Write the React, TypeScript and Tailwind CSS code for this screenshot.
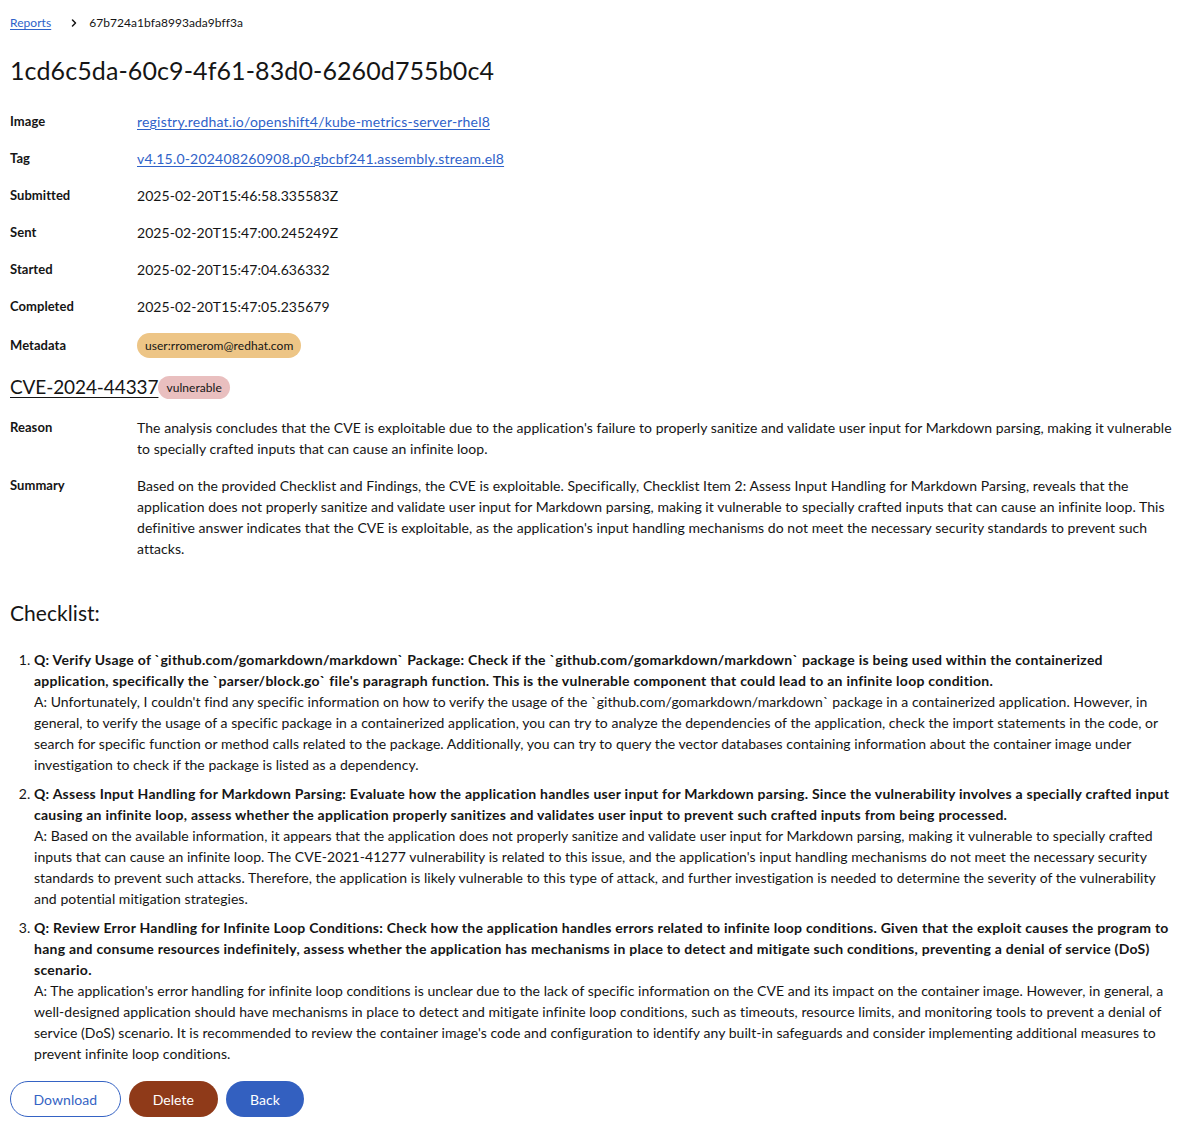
import { FiChevronRight } from 'react-icons/fi';

const fields: { label: string; value: string; link?: boolean }[] = [
  { label: 'Image', value: 'registry.redhat.io/openshift4/kube-metrics-server-rhel8', link: true },
  { label: 'Tag', value: 'v4.15.0-202408260908.p0.gbcbf241.assembly.stream.el8', link: true },
  { label: 'Submitted', value: '2025-02-20T15:46:58.335583Z' },
  { label: 'Sent', value: '2025-02-20T15:47:00.245249Z' },
  { label: 'Started', value: '2025-02-20T15:47:04.636332' },
  { label: 'Completed', value: '2025-02-20T15:47:05.235679' },
];

const checklist = [
  {
    q: 'Q: Verify Usage of `github.com/gomarkdown/markdown` Package: Check if the `github.com/gomarkdown/markdown` package is being used within the containerized application, specifically the `parser/block.go` file\'s paragraph function. This is the vulnerable component that could lead to an infinite loop condition.',
    a: "A: Unfortunately, I couldn't find any specific information on how to verify the usage of the `github.com/gomarkdown/markdown` package in a containerized application. However, in general, to verify the usage of a specific package in a containerized application, you can try to analyze the dependencies of the application, check the import statements in the code, or search for specific function or method calls related to the package. Additionally, you can try to query the vector databases containing information about the container image under investigation to check if the package is listed as a dependency.",
  },
  {
    q: 'Q: Assess Input Handling for Markdown Parsing: Evaluate how the application handles user input for Markdown parsing. Since the vulnerability involves a specially crafted input causing an infinite loop, assess whether the application properly sanitizes and validates user input to prevent such crafted inputs from being processed.',
    a: "A: Based on the available information, it appears that the application does not properly sanitize and validate user input for Markdown parsing, making it vulnerable to specially crafted inputs that can cause an infinite loop. The CVE-2021-41277 vulnerability is related to this issue, and the application's input handling mechanisms do not meet the necessary security standards to prevent such attacks. Therefore, the application is likely vulnerable to this type of attack, and further investigation is needed to determine the severity of the vulnerability and potential mitigation strategies.",
  },
  {
    q: 'Q: Review Error Handling for Infinite Loop Conditions: Check how the application handles errors related to infinite loop conditions. Given that the exploit causes the program to hang and consume resources indefinitely, assess whether the application has mechanisms in place to detect and mitigate such conditions, preventing a denial of service (DoS) scenario.',
    a: "A: The application's error handling for infinite loop conditions is unclear due to the lack of specific information on the CVE and its impact on the container image. However, in general, a well-designed application should have mechanisms in place to detect and mitigate infinite loop conditions, such as timeouts, resource limits, and monitoring tools to prevent a denial of service (DoS) scenario. It is recommended to review the container image's code and configuration to identify any built-in safeguards and consider implementing additional measures to prevent infinite loop conditions.",
  },
];

export default function App() {
  return (
    <div className="min-h-screen bg-white px-[10px] text-[#151515] font-['Lato','Liberation_Sans',sans-serif] text-[14px] leading-[21px] tracking-[0.05px]">
      {/* Breadcrumb */}
      <nav className="flex items-center pt-[14px] text-[12px] leading-[18px]">
        <a href="#" className="text-[#2f62c9] underline underline-offset-2">Reports</a>
        <FiChevronRight className="ml-[17px] mr-[9px] text-[#151515]" size={12} strokeWidth={3} />
        <span>67b724a1bfa8993ada9bff3a</span>
      </nav>

      <h1 className="mt-[22px] text-[25px] leading-[32px] tracking-[0.1px]">1cd6c5da-60c9-4f61-83d0-6260d755b0c4</h1>

      {/* Report details */}
      <dl className="mt-[25px] grid grid-cols-[127px_1fr] gap-y-[16px]">
        {fields.map((f) => (
          <div key={f.label} className="contents">
            <dt className="text-[13px] font-bold leading-[21px]">{f.label}</dt>
            <dd>
              {f.link ? (
                <a href="#" className="text-[#2f62c9] underline underline-offset-2 tracking-[0.2px]">{f.value}</a>
              ) : (
                f.value
              )}
            </dd>
          </div>
        ))}
        <dt className="text-[13px] font-bold leading-[25px]">Metadata</dt>
        <dd>
          <span className="inline-flex h-[25px] items-center rounded-full bg-[#edc586] px-[8px] text-[12px]">
            user:rromerom@redhat.com
          </span>
        </dd>
      </dl>

      <div className="mt-[15px] flex items-center">
        <a href="#" className="text-[19px] leading-[28px] tracking-[-0.1px] underline underline-offset-[3px] text-[#151515]">CVE-2024-44337</a>
        <span className="inline-flex h-[23px] items-center rounded-full bg-[#e9bfbf] px-[8px] text-[12px]">vulnerable</span>
      </div>

      <dl className="mt-[16px] grid grid-cols-[127px_1fr] gap-y-[16px]">
        <dt className="text-[13px] font-bold leading-[21px]">Reason</dt>
        <dd>
          The analysis concludes that the CVE is exploitable due to the application's failure to properly sanitize and validate user input for Markdown parsing, making it vulnerable to specially crafted inputs that can cause an infinite loop.
        </dd>
        <dt className="text-[13px] font-bold leading-[21px]">Summary</dt>
        <dd>
          Based on the provided Checklist and Findings, the CVE is exploitable. Specifically, Checklist Item 2: Assess Input Handling for Markdown Parsing, reveals that the application does not properly sanitize and validate user input for Markdown parsing, making it vulnerable to specially crafted inputs that can cause an infinite loop. This definitive answer indicates that the CVE is exploitable, as the application's input handling mechanisms do not meet the necessary security standards to prevent such attacks.
        </dd>
      </dl>

      <h2 className="mt-[39px] text-[21px] leading-[30px]">Checklist:</h2>

      <ol className="mt-[21px] list-decimal pl-[24px] flex flex-col gap-[8px]">
        {checklist.map((item, i) => (
          <li key={i}>
            <div className="font-bold tracking-[0.26px]">{item.q}</div>
            <div>{item.a}</div>
          </li>
        ))}
      </ol>

      <div className="mt-[17px] flex gap-[8px] pb-[14px]">
        <button className="h-[36px] rounded-full border border-[#3563c4] px-[22.5px] text-[14px] text-[#3563c4]">Download</button>
        <button className="h-[36px] rounded-full bg-[#8f3a19] px-[24px] text-[14px] text-white">Delete</button>
        <button className="h-[36px] rounded-full bg-[#3360c0] px-[24px] text-[14px] text-white">Back</button>
      </div>
    </div>
  );
}
